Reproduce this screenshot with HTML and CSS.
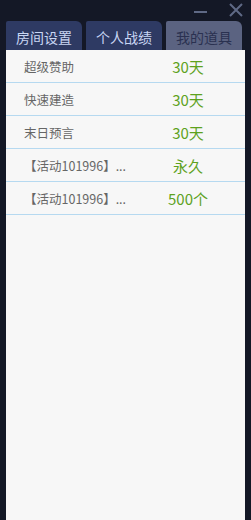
FILE: index.html
```html
<!DOCTYPE html>
<html>
<head>
<meta charset="utf-8">
<link rel="stylesheet" href="styles.css">
</head>
<body>
<div class="win">
  <div class="titlebar">
    <svg class="ic-min" width="14" height="4" viewBox="0 0 14 4"><rect x="0" y="1" width="13" height="2" fill="#5f6985"/></svg>
    <svg class="ic-close" width="16" height="16" viewBox="0 0 16 16"><path d="M2 2 L14 14 M14 2 L2 14" stroke="#5f6985" stroke-width="2" fill="none"/></svg>
  </div>
  <div class="tabs">
    <div class="tab on">房间设置</div>
    <div class="tab on">个人战绩</div>
    <div class="tab off">我的道具</div>
  </div>
  <div class="panel">
    <div class="row"><span class="name">超级赞助</span><span class="val">30天</span></div>
    <div class="row"><span class="name">快速建造</span><span class="val">30天</span></div>
    <div class="row"><span class="name">末日预言</span><span class="val">30天</span></div>
    <div class="row"><span class="name act">【活动101996】...</span><span class="val">永久</span></div>
    <div class="row"><span class="name act">【活动101996】...</span><span class="val">500个</span></div>
  </div>
</div>
</body>
</html>
```
FILE: styles.css
```css
html, body {
  margin: 0;
  padding: 0;
  background: #141826;
  height: 100%;
}
.win {
  width: 251px;
  height: 520px;
  display: flex;
  flex-direction: column;
  font-family: "Noto Sans CJK SC", "Noto Sans", sans-serif;
}
.titlebar {
  height: 21px;
  display: flex;
  justify-content: flex-end;
  align-items: flex-start;
  gap: 0;
  position: relative;
}
.ic-min {
  margin-top: 10px;
  margin-right: 20px;
}
.ic-close {
  margin-top: 2px;
  margin-right: 7px;
}
.tabs {
  height: 29px;
  display: flex;
  padding-left: 6px;
  gap: 4px;
}
.tab {
  width: 76px;
  height: 29px;
  box-sizing: border-box;
  display: flex;
  align-items: center;
  justify-content: center;
  font-size: 14px;
  border-radius: 2px 6px 0 0;
  clip-path: polygon(0 0, 100% 0, 100% 100%, 0 100%);
  padding-top: 3px;
}
.tab.on {
  background: #2e3a63;
  color: #c9d6f3;
}
.tab.off {
  background: #5b6381;
  color: #2a3150;
}
.panel {
  flex: 1;
  margin: 0 6px;
  background: #f7f7f7;
}
.row {
  height: 33px;
  box-sizing: border-box;
  border-bottom: 1px solid #b6d9f0;
  display: flex;
  align-items: center;
  position: relative;
}
.name {
  margin-left: 18px;
  width: 130px;
  font-size: 12.5px;
  color: #666;
}
.name.act {
  margin-left: 18px;
}
.val {
  position: absolute;
  left: 182px;
  transform: translateX(-50%);
  font-size: 15px;
  color: #5ea21e;
}
```
